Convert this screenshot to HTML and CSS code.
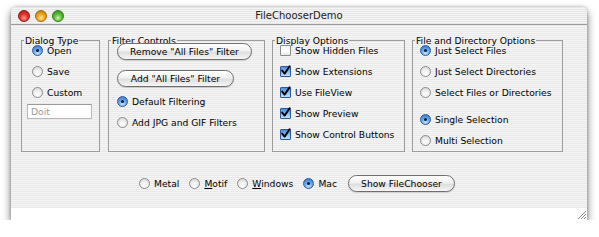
FILE: index.html
```html
<!DOCTYPE html>
<html>
<head>
<meta charset="utf-8">
<link rel="stylesheet" href="styles.css">
</head>
<body>
<div class="window">
  <div class="titlebar">
    <div class="lights">
      <span class="light red"></span>
      <span class="light yellow"></span>
      <span class="light green"></span>
    </div>
    <div class="title">FileChooserDemo</div>
  </div>
  <div class="content">
    <div class="groups">
      <fieldset class="group g-dialog">
        <legend>Dialog Type</legend>
        <div class="items">
          <div class="row"><span class="radio on"></span><span>Open</span></div>
          <div class="row"><span class="radio"></span><span>Save</span></div>
          <div class="row"><span class="radio"></span><span>Custom</span></div>
          <div class="field">Doit</div>
        </div>
      </fieldset>
      <fieldset class="group g-filter">
        <legend>Filter Controls</legend>
        <div class="items">
          <div class="btn btn-remove">Remove "All Files" Filter</div>
          <div class="btn btn-add">Add "All Files" Filter</div>
          <div class="row r-first"><span class="radio on"></span><span>Default Filtering</span></div>
          <div class="row"><span class="radio"></span><span>Add JPG and GIF Filters</span></div>
        </div>
      </fieldset>
      <fieldset class="group g-display">
        <legend>Display Options</legend>
        <div class="items">
          <div class="row"><span class="check"></span><span>Show Hidden Files</span></div>
          <div class="row"><span class="check on"><svg viewBox="0 0 11 11" width="11" height="11"><path d="M2.2 5.6 L4.6 8.6 L9.6 1.2" fill="none" stroke="#000" stroke-width="1.9" stroke-linecap="round" stroke-linejoin="round"/></svg></span><span>Show Extensions</span></div>
          <div class="row"><span class="check on"><svg viewBox="0 0 11 11" width="11" height="11"><path d="M2.2 5.6 L4.6 8.6 L9.6 1.2" fill="none" stroke="#000" stroke-width="1.9" stroke-linecap="round" stroke-linejoin="round"/></svg></span><span>Use FileView</span></div>
          <div class="row"><span class="check on"><svg viewBox="0 0 11 11" width="11" height="11"><path d="M2.2 5.6 L4.6 8.6 L9.6 1.2" fill="none" stroke="#000" stroke-width="1.9" stroke-linecap="round" stroke-linejoin="round"/></svg></span><span>Show Preview</span></div>
          <div class="row"><span class="check on"><svg viewBox="0 0 11 11" width="11" height="11"><path d="M2.2 5.6 L4.6 8.6 L9.6 1.2" fill="none" stroke="#000" stroke-width="1.9" stroke-linecap="round" stroke-linejoin="round"/></svg></span><span>Show Control Buttons</span></div>
        </div>
      </fieldset>
      <fieldset class="group g-file">
        <legend>File and Directory Options</legend>
        <div class="items">
          <div class="row"><span class="radio on"></span><span>Just Select Files</span></div>
          <div class="row"><span class="radio"></span><span>Just Select Directories</span></div>
          <div class="row"><span class="radio"></span><span>Select Files or Directories</span></div>
          <div class="row r-gap"><span class="radio on"></span><span>Single Selection</span></div>
          <div class="row"><span class="radio"></span><span>Multi Selection</span></div>
        </div>
      </fieldset>
    </div>
    <div class="footer">
      <div class="opt"><span class="radio"></span><span>Metal</span></div>
      <div class="opt"><span class="radio"></span><span><u>M</u>otif</span></div>
      <div class="opt"><span class="radio"></span><span><u>W</u>indows</span></div>
      <div class="opt"><span class="radio on"></span><span>Mac</span></div>
      <div class="btn btn-show">Show FileChooser</div>
    </div>
  </div>
  <div class="statusbar">
    <svg class="grip" viewBox="0 0 11 11" width="11" height="11">
      <path d="M10 2 L2 10 M10 5 L5 10 M10 8 L8 10" stroke="#8a8a8a" stroke-width="1"/>
      <path d="M10.8 2.8 L2.8 10.8 M10.8 5.8 L5.8 10.8 M10.8 8.8 L8.8 10.8" stroke="#ffffff" stroke-width="0.8"/>
    </svg>
  </div>
</div>
</body>
</html>
```
FILE: styles.css
```css
html, body {
  margin: 0;
  padding: 0;
  background: #ffffff;
}
body {
  font-family: "DejaVu Sans", "Liberation Sans", sans-serif;
  font-size: 9.2px;
  color: #000;
}
.window {
  margin: 7px 0 0 11px;
  width: 576px;
  height: 213px;
  border-radius: 5px 5px 0 0;
  box-shadow: 0 4px 9px rgba(0,0,0,0.55), 0 0 3px rgba(0,0,0,0.25);
  display: flex;
  flex-direction: column;
  overflow: hidden;
}
.titlebar {
  height: 17px;
  flex: none;
  border-bottom: 1px solid #9a9a9a;
  background: repeating-linear-gradient(to bottom, #e6e6e6 0 1px, #f4f4f4 1px 2px);
  display: flex;
  align-items: center;
  position: relative;
}
.lights {
  display: flex;
  gap: 5px;
  padding-left: 7px;
}
.light {
  width: 12px;
  height: 12px;
  border-radius: 50%;
  box-sizing: border-box;
}
.red { background: radial-gradient(circle at 50% 70%, #ff9a8a 0, #e3332a 45%, #a8170f 100%); border: 1px solid #8b1a12; }
.yellow { background: radial-gradient(circle at 50% 70%, #ffe58a 0, #f0a51a 45%, #b0700a 100%); border: 1px solid #9a6a10; }
.green { background: radial-gradient(circle at 50% 70%, #c8f5a0 0, #5cbc34 45%, #2f8a18 100%); border: 1px solid #2f7a1a; }
.title {
  position: absolute;
  left: 0;
  right: 0;
  top: 0;
  bottom: 0;
  display: flex;
  align-items: center;
  justify-content: center;
  font-size: 10px;
  color: #1a1a1a;
  pointer-events: none;
}
.content {
  flex: 1;
  background: repeating-linear-gradient(to bottom, #e9e9e9 0 1px, #f5f5f5 1px 2px);
  display: flex;
  flex-direction: column;
}
.groups {
  display: flex;
  padding: 10px 0 0 10px;
  gap: 8px;
}
.group {
  margin: 0;
  border: 1px solid #9c9c9c;
  padding: 0;
  height: 117px;
  box-sizing: border-box;
  min-width: 0;
}
.group legend {
  padding: 0 1px;
  margin-left: 2px;
  line-height: 11px;
}
.g-dialog { width: 79px; }
.g-filter { width: 157px; }
.g-display { width: 133px; margin-left: -1px; }
.g-file { width: 151px; margin-left: -1px; }
.items {
  display: flex;
  flex-direction: column;
  margin-top: -6px;
}
.g-dialog .items { padding-left: 10px; }
.g-filter .items { padding-left: 8px; }
.g-display .items { padding-left: 7px; }
.g-file .items { padding-left: 7px; }
.row {
  height: 21px;
  display: flex;
  align-items: center;
  gap: 4px;
  white-space: nowrap;
}
.r-gap { margin-top: 6px; }
.r-first { margin-top: 4px; }
.radio {
  width: 11px;
  height: 11px;
  flex: none;
  box-sizing: border-box;
  border-radius: 50%;
  border: 1px solid #8a8a8a;
  background: radial-gradient(circle at 50% 75%, #ffffff 0, #f2f2f2 40%, #d2d2d2 100%);
  position: relative;
}
.radio.on {
  border-color: #2a5a9c;
  background: radial-gradient(circle at 50% 80%, #c6e4ff 0, #6aa8ec 45%, #2a6ccc 100%);
}
.radio.on::after {
  content: "";
  position: absolute;
  left: 3px;
  top: 3px;
  width: 3px;
  height: 3px;
  border-radius: 50%;
  background: #0b1d3a;
}
.check {
  width: 11px;
  height: 11px;
  flex: none;
  box-sizing: border-box;
  border: 1px solid #8a8a8a;
  border-radius: 1px;
  background: linear-gradient(to bottom, #f4f4f4, #ffffff 60%, #e6e6e6);
  position: relative;
}
.check.on {
  border-color: #2a5a9c;
  background: linear-gradient(to bottom, #4d8fe0, #8cc2f4 55%, #bfe0ff);
}
.check svg {
  position: absolute;
  left: -1px;
  top: -2px;
}
.field {
  margin-top: 1px;
  width: 65px;
  height: 15px;
  box-sizing: border-box;
  background: #fff;
  border: 1px solid #b8b8b8;
  border-top-color: #9a9a9a;
  color: #9a9a9a;
  padding-left: 3px;
  line-height: 13px;
  margin-left: -5px;
}
.btn {
  height: 17px;
  box-sizing: border-box;
  border: 1px solid #6e6e6e;
  border-radius: 9px;
  background: linear-gradient(to bottom, #ffffff 0, #f1f1f1 45%, #dedede 55%, #f6f6f6 100%);
  display: flex;
  align-items: center;
  justify-content: center;
  white-space: nowrap;
  box-shadow: 0 1px 1px rgba(0,0,0,0.15);
}
.btn-remove { width: 135px; margin-top: 3px; }
.btn-add { width: 117px; margin-top: 10px; }
.footer {
  display: flex;
  align-items: center;
  justify-content: center;
  padding-top: 23px;
  padding-right: 4px;
  gap: 10px;
}
.opt {
  display: flex;
  align-items: center;
  gap: 4px;
}
.footer u { text-decoration-thickness: 1px; text-underline-offset: 1px; }
.btn-show { width: 107px; margin-left: 1px; }
.statusbar {
  height: 12px;
  flex: none;
  background: #ffffff;
  display: flex;
  justify-content: flex-end;
  align-items: flex-end;
}
.grip { display: block; }
```
